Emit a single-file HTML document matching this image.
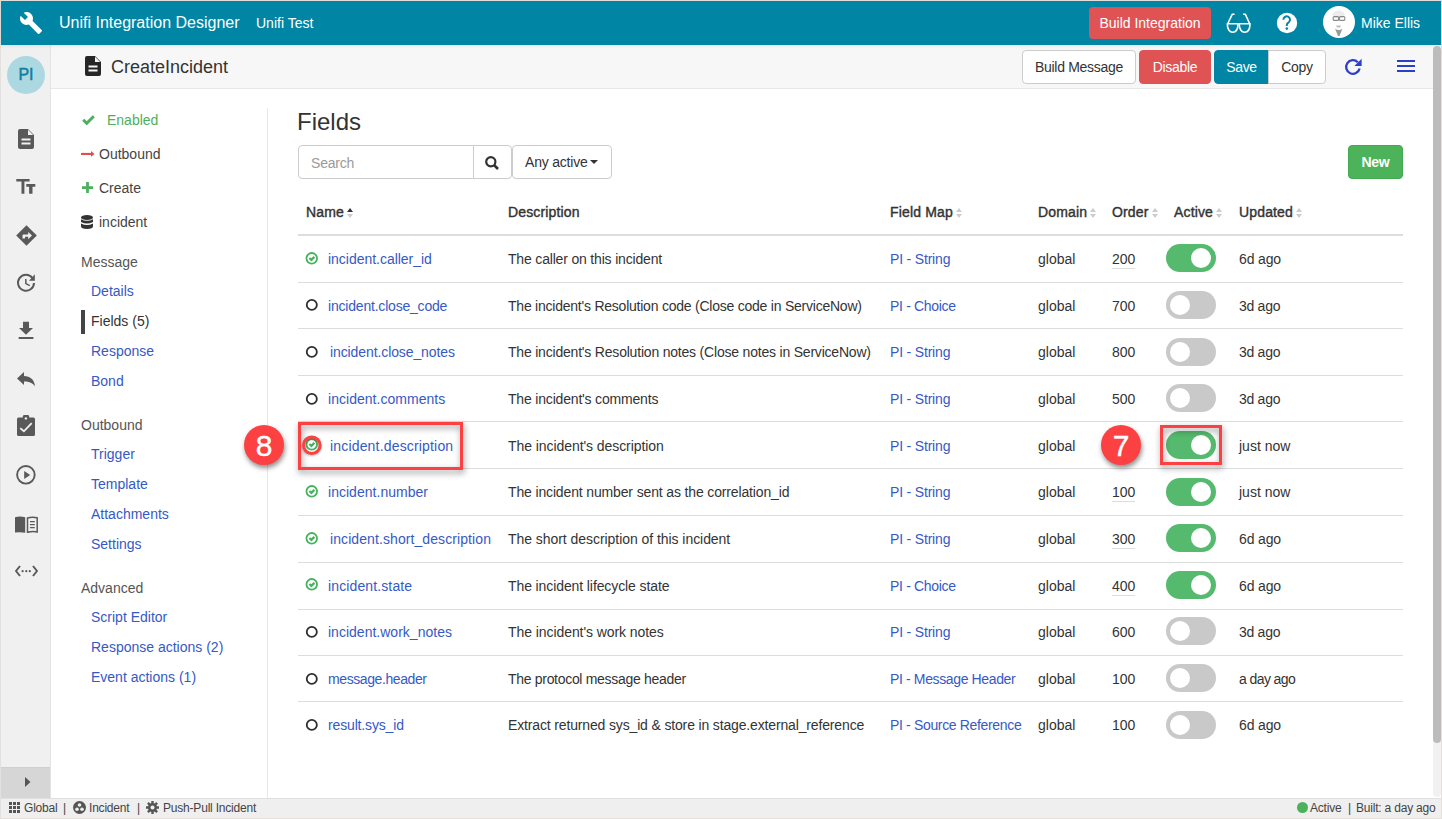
<!DOCTYPE html>
<html><head><meta charset="utf-8">
<style>
*{box-sizing:border-box}
html,body{margin:0;padding:0;width:1442px;height:819px;overflow:hidden;background:#fff;font-family:"Liberation Sans",sans-serif;color:#333}
.a{position:absolute;white-space:nowrap}
#frame{position:absolute;left:0;top:0;width:1442px;height:819px;border:1px solid #e4e0de}
#top{position:absolute;left:1px;top:1px;width:1440px;height:44px;background:#0085a4;box-shadow:0 1px 3px rgba(0,0,0,0.08)}
#top .a{}
#hdr{position:absolute;left:51px;top:45px;width:1382px;height:44px;background:#f7f7f7;border-bottom:1px solid #e7e7e7}
#side{position:absolute;left:1px;top:45px;width:50px;height:753px;background:#f0f0f0;border-right:1px solid #e3e3e3}
#foot{position:absolute;left:1px;top:798px;width:1440px;height:20px;background:#efefef;border-top:1px solid #e0e0e0}
.btn{position:absolute;height:34px;border-radius:4px;font-size:14px;line-height:32px;text-align:center;border:1px solid #ccc;background:#fff;color:#333;white-space:nowrap;letter-spacing:-0.3px}
.nav{position:absolute;font-size:14px;line-height:16px;white-space:nowrap;color:#444}
.lnk{color:#3659c6}
.th{position:absolute;top:204px;font-size:14px;font-weight:normal;-webkit-text-stroke:0.4px #333;letter-spacing:0.15px;line-height:16px;color:#333;white-space:nowrap}
.c{position:absolute;font-size:14px;line-height:16px;white-space:nowrap;letter-spacing:-0.15px}
.tg{position:absolute;left:1166px;width:50px;height:28px;border-radius:14px;background:#c9c9c9}
.tg.on{background:#56ba6e}
.tg i{position:absolute;top:4px;left:4px;width:20px;height:20px;border-radius:10px;background:#fff}
.tg.on i{left:25px}
.sort{display:inline-block;width:6px;height:10px;position:relative;margin-left:3px;vertical-align:-1px}
.sort:before{content:"";position:absolute;left:0;top:0;border-left:3px solid transparent;border-right:3px solid transparent;border-bottom:4px solid #ccc}
.sort:after{content:"";position:absolute;left:0;top:6px;border-left:3px solid transparent;border-right:3px solid transparent;border-top:4px solid #ccc}
.sort.up:before{border-bottom-color:#333}
.ord{border-bottom:1px solid #ddd;padding-bottom:1px}
.ft{top:801px;font-size:12px;line-height:14px;color:#444;letter-spacing:-0.2px}

</style></head><body>
<div id="frame"></div>
<div id="side"></div>
<div id="hdr"></div>
<div id="foot"></div>
<div id="top"></div>
<svg class="a" style="left:19px;top:11px" width="24" height="24" viewBox="0 0 24 24"><path fill="#fff" d="M22.7 19l-9.1-9.1c.9-2.3.4-5-1.5-6.9-2-2-5-2.4-7.4-1.3L9 6 6 9 1.6 4.7C.4 7.1.9 10.1 2.9 12.1c1.9 1.9 4.6 2.4 6.9 1.5l9.1 9.1c.4.4 1 .4 1.4 0l2.3-2.3c.5-.4.5-1.1.1-1.4z"/></svg>
<div class="a" style="left:59px;top:14px;font-size:16px;line-height:18px;color:#fff">Unifi Integration Designer</div>
<div class="a" style="left:256px;top:14px;font-size:14px;line-height:18px;color:#fff">Unifi Test</div>
<div class="a" style="left:1089px;top:7px;width:122px;height:32px;background:#e05355;border-radius:4px;color:#fff;font-size:14px;line-height:32px;text-align:center">Build Integration</div>
<svg class="a" style="left:1226px;top:13px" width="26" height="21" viewBox="0 0 26 21"><g fill="none" stroke="#fff" stroke-width="1.6" stroke-linejoin="round"><path d="M1.3 10.8H12C12 17 9.3 19.2 6.65 19.2S1.3 17 1.3 10.8z"/><path d="M13.2 10.8H24C24 17 21.3 19.2 18.6 19.2S13.2 17 13.2 10.8z"/><path d="M1.6 11L6.2 1.3H8.6M23.8 11L19.4 1.3H17"/></g></svg>
<svg class="a" style="left:1276px;top:12px" width="22" height="22" viewBox="0 0 22 22"><circle cx="11" cy="11" r="10.2" fill="#fff"/><path fill="none" stroke="#0085a4" stroke-width="2" d="M7.4 7.7A3.3 3.3 0 1 1 12.7 10.3Q10.8 11.3 10.8 12.9V14"/><circle cx="10.8" cy="16.6" r="1.3" fill="#0085a4"/></svg>
<svg class="a" style="left:1323px;top:6px" width="32" height="32" viewBox="0 0 32 32"><circle cx="16" cy="16" r="16" fill="#fff"/><ellipse cx="15.5" cy="8.5" rx="6" ry="4" fill="#ececec"/><g fill="none" stroke="#8a8a8a" stroke-width="1.1"><rect x="10.2" y="10.6" width="5.4" height="3.8" rx="1"/><rect x="16.4" y="10.6" width="5.4" height="3.8" rx="1"/></g><path d="M13 19.5h5l-1 2h-3z" fill="#bbb"/><path d="M12 22.5q4 3 7.5 0l-3 7.5h-1.5z" fill="#9a9a9a"/></svg>
<div class="a" style="left:1361px;top:14px;font-size:14px;line-height:18px;color:#fff">Mike Ellis</div>
<svg class="a" style="left:18px;top:129px" width="16" height="20" viewBox="0 0 16 20"><path fill="#595959" d="M2 0h8l6 6v12a2 2 0 0 1-2 2H2a2 2 0 0 1-2-2V2a2 2 0 0 1 2-2z"/><path fill="#f0f0f0" d="M10 0.8v5.2h5.2z"/><rect x="3.5" y="9.5" width="9" height="2" fill="#f0f0f0"/><rect x="3.5" y="13.5" width="9" height="2" fill="#f0f0f0"/></svg>
<svg class="a" style="left:16px;top:179px" width="20" height="15" viewBox="0 0 20 15"><path fill="#595959" d="M0.3 0h13.3v2.5H8.4v12.2H5.5V2.5H0.3z M10.3 5h9v2.7h-2.8v7h-3.4v-7h-2.8z"/></svg>
<svg class="a" style="left:15.5px;top:224.5px" width="21" height="21" viewBox="0 0 21 21"><path fill="#595959" d="M10.5 0.2l10.3 10.3-10.3 10.3L0.2 10.5z"/><path fill="#f0f0f0" d="M6.5 13.5V10.4a1 1 0 0 1 1-1H12.2V7l3.8 3.6-3.8 3.6V11.8H9v1.7z"/></svg>
<svg class="a" style="left:16px;top:273px" width="21" height="20" viewBox="0 0 21 20"><path fill="none" stroke="#595959" stroke-width="2" d="M18 9.9A8 8 0 1 1 16.4 5"/><path fill="#595959" d="M18.8 1.2v6.5H13z"/><path fill="none" stroke="#595959" stroke-width="1.5" d="M9.85 5.9V10.6l3.9 2.1"/></svg>
<svg class="a" style="left:18px;top:321px" width="16" height="19" viewBox="0 0 16 19"><path fill="#595959" d="M5 0.8h6v6.2h4L8 13.8 1 7h4z"/><rect x="0.7" y="16" width="14.7" height="2" fill="#595959"/></svg>
<svg class="a" style="left:17px;top:372px" width="18" height="15" viewBox="0 0 18 15"><path fill="#595959" d="M0 6.5L7 0v4C13 4 17.5 7.5 18 14.5 16 11 12.5 9.5 7 9.5V13z"/></svg>
<svg class="a" style="left:17px;top:415px" width="18" height="21" viewBox="0 0 18 21"><path fill="#595959" d="M1.5 2.6h4.2a3.3 3.3 0 0 1 6.6 0h4.2A1.5 1.5 0 0 1 18 4.1v15.3a1.5 1.5 0 0 1-1.5 1.5h-15A1.5 1.5 0 0 1 0 19.4V4.1A1.5 1.5 0 0 1 1.5 2.6z"/><circle cx="8.9" cy="3.4" r="1.2" fill="#f0f0f0"/><path fill="none" stroke="#f0f0f0" stroke-width="1.8" d="M3.2 13.1L6.9 16.3 14.7 8.1"/></svg>
<svg class="a" style="left:16px;top:465px" width="20" height="20" viewBox="0 0 20 20"><circle cx="9.9" cy="9.8" r="8.8" fill="none" stroke="#595959" stroke-width="1.9"/><path fill="#595959" d="M8.2 6.1l6 3.9-6 3.9z"/></svg>
<svg class="a" style="left:15px;top:515.5px" width="23" height="17" viewBox="0 0 23 17"><path fill="#595959" d="M0 1.2Q5 0 10.2 1.3V16.8Q5 15.6 0 16.6z"/><path fill="none" stroke="#595959" stroke-width="1.5" d="M12.5 1.9Q17.5 0.6 22.2 1.8V15.9Q17.5 15.1 12.5 16.3z"/><path fill="none" stroke="#595959" stroke-width="1.2" d="M15 5.6h4.8M15 8.6h4.8M15 11.6h4.8"/></svg>
<svg class="a" style="left:15px;top:565px" width="23" height="12" viewBox="0 0 23 12"><path fill="none" stroke="#595959" stroke-width="2" d="M5 1L1 6l4 5 M18 1L22 6l-4 5"/><circle cx="7.6" cy="6.2" r="1.1" fill="#595959"/><circle cx="11.3" cy="6.2" r="1.1" fill="#595959"/><circle cx="14.8" cy="6.2" r="1.1" fill="#595959"/></svg>
<div class="a" style="left:7px;top:56px;width:38px;height:38px;border-radius:19px;background:#acd8e1;color:#0f7fa0;font-size:16px;font-weight:normal;-webkit-text-stroke:0.5px #0f7fa0;line-height:37px;letter-spacing:0px;text-align:center">PI</div>
<div class="a" style="left:1px;top:767px;width:49px;height:31px;background:#d6d6d6;border-top:1px solid #cfcfcf"></div>
<svg class="a" style="left:24px;top:777px" width="8" height="10" viewBox="0 0 8 10"><path fill="#555" d="M1 0l5.5 5L1 10z"/></svg>
<svg class="a" style="left:85px;top:56px" width="16" height="20" viewBox="0 0 16 20"><path fill="#262626" d="M2 0h8l6 6v12a2 2 0 0 1-2 2H2a2 2 0 0 1-2-2V2a2 2 0 0 1 2-2z"/><path fill="#f7f7f7" d="M10 0.8v5.2h5.2z"/><rect x="3.5" y="9.5" width="9" height="2" fill="#f7f7f7"/><rect x="3.5" y="13.5" width="9" height="2" fill="#f7f7f7"/></svg>
<div class="a" style="left:111px;top:57px;font-size:18px;line-height:20px;color:#333">CreateIncident</div>
<div class="btn" style="left:1022px;top:50px;width:114px">Build Message</div>
<div class="btn" style="left:1139px;top:50px;width:72px;background:#e05355;border-color:#e05355;color:#fff">Disable</div>
<div class="btn" style="left:1214px;top:50px;width:55px;background:#0085a4;border-color:#0085a4;color:#fff;border-radius:4px 0 0 4px">Save</div>
<div class="btn" style="left:1268px;top:50px;width:58px;border-radius:0 4px 4px 0">Copy</div>
<svg class="a" style="left:1344px;top:58px" width="19" height="18" viewBox="0 0 19 18"><path fill="none" stroke="#2b3fcb" stroke-width="2.3" d="M15.6 10.5A6.8 6.8 0 1 1 13.8 4.2"/><path fill="#2b3fcb" d="M17.6 0.8v7.2h-7.2z"/></svg>
<div class="a" style="left:1397px;top:60px;width:18px;height:2px;background:#2b3fcb"></div>
<div class="a" style="left:1397px;top:65px;width:18px;height:2px;background:#2b3fcb"></div>
<div class="a" style="left:1397px;top:70px;width:18px;height:2px;background:#2b3fcb"></div>
<div class="a" style="left:1433px;top:45px;width:8px;height:752px;background:#f1f1f1;border-radius:4px"></div>
<div class="a" style="left:1433px;top:46px;width:8px;height:697px;background:#bcbcbc;border-radius:4px"></div>
<div class="a" style="left:267px;top:108px;width:1px;height:690px;background:#e8e8e8"></div>
<svg class="a" style="left:82px;top:115px" width="13" height="10" viewBox="0 0 13 10"><path fill="none" stroke="#4cb05e" stroke-width="3" d="M1.2 4.8l3.5 3.5L11.8 1.2"/></svg>
<div class="nav" style="left:107px;top:112px;color:#4cb05e">Enabled</div>
<svg class="a" style="left:80px;top:150px" width="16" height="8" viewBox="0 0 16 8"><rect x="1" y="2.9" width="11" height="2.1" fill="#e04d4d"/><path fill="#e04d4d" d="M11 1l3.5 3L11 6.8z"/></svg>
<div class="nav" style="left:99px;top:146px">Outbound</div>
<svg class="a" style="left:81.5px;top:182px" width="11" height="11" viewBox="0 0 12 12"><path fill="#4cb05e" d="M4.5 0h3v4.5H12v3H7.5V12h-3V7.5H0v-3h4.5z"/></svg>
<div class="nav" style="left:99px;top:180px">Create</div>
<svg class="a" style="left:81px;top:215px" width="12" height="14" viewBox="0 0 12 14"><ellipse cx="6" cy="2.5" rx="6" ry="2.5" fill="#333"/><path fill="#333" d="M0 4.3q6 3 12 0v2.6q-6 3-12 0z M0 8.5q6 3 12 0v2.8Q12 14 6 14T0 11.3z"/></svg>
<div class="nav" style="left:99px;top:214px">incident</div>
<div class="nav" style="left:81px;top:254px;color:#555">Message</div>
<div class="nav lnk" style="left:91px;top:283px">Details</div>
<div class="nav" style="left:91px;top:313px;color:#333">Fields (5)</div>
<div class="nav lnk" style="left:91px;top:343px">Response</div>
<div class="nav lnk" style="left:91px;top:373px">Bond</div>
<div class="nav" style="left:81px;top:417px;color:#555">Outbound</div>
<div class="nav lnk" style="left:91px;top:446px">Trigger</div>
<div class="nav lnk" style="left:91px;top:476px">Template</div>
<div class="nav lnk" style="left:91px;top:506px">Attachments</div>
<div class="nav lnk" style="left:91px;top:536px">Settings</div>
<div class="nav" style="left:81px;top:580px;color:#555">Advanced</div>
<div class="nav lnk" style="left:91px;top:609px">Script Editor</div>
<div class="nav lnk" style="left:91px;top:639px">Response actions (2)</div>
<div class="nav lnk" style="left:91px;top:669px">Event actions (1)</div>
<div class="a" style="left:81px;top:310px;width:4px;height:24px;background:#444"></div>
<div class="a" style="left:297px;top:108px;font-size:24px;line-height:28px;color:#333">Fields</div>
<div class="a" style="left:298px;top:145px;width:176px;height:34px;border:1px solid #ccc;border-radius:4px 0 0 4px;background:#fff"></div>
<div class="a" style="left:311px;top:155px;font-size:14px;line-height:16px;color:#9a9a9a;letter-spacing:-0.2px">Search</div>
<div class="a" style="left:473px;top:145px;width:39px;height:34px;border:1px solid #ccc;border-radius:0 4px 4px 0;background:#fff"></div>
<svg class="a" style="left:485px;top:156px" width="14" height="14" viewBox="0 0 14 14"><circle cx="5.8" cy="5.8" r="4.6" fill="none" stroke="#333" stroke-width="2.2"/><path stroke="#333" stroke-width="2.6" d="M9 9l4 4"/></svg>
<div class="a" style="left:512px;top:145px;width:100px;height:34px;border:1px solid #ccc;border-radius:4px;background:#fff"></div>
<div class="a" style="left:525px;top:154px;font-size:14px;line-height:16px;color:#333;letter-spacing:-0.2px">Any active</div>
<svg class="a" style="left:590px;top:160px" width="8" height="4" viewBox="0 0 8 4"><path fill="#333" d="M0 0h8L4 4z"/></svg>
<div class="a" style="left:1348px;top:145px;width:55px;height:34px;border-radius:4px;background:#4db35b;border:1px solid #40ab50;color:#fff;font-size:14px;font-weight:bold;line-height:32px;text-align:center;letter-spacing:-0.3px">New</div>
<div class="th" style="left:306px">Name<span class="sort up"></span></div>
<div class="th" style="left:508px">Description</div>
<div class="th" style="left:890px">Field Map<span class="sort"></span></div>
<div class="th" style="left:1038px">Domain<span class="sort"></span></div>
<div class="th" style="left:1112px">Order<span class="sort"></span></div>
<div class="th" style="left:1174px">Active<span class="sort"></span></div>
<div class="th" style="left:1239px">Updated<span class="sort"></span></div>
<div class="a" style="left:298px;top:234px;width:1105px;height:2px;background:#ddd"></div>
<div class="a" style="left:298px;top:282px;width:1105px;height:1px;background:#ddd"></div>
<svg class="a" style="left:305px;top:251.8px" width="13" height="13" viewBox="0 0 13 13"><circle cx="6.75" cy="6.3" r="5.3" fill="none" stroke="#45b35e" stroke-width="1.8"/><path fill="none" stroke="#45b35e" stroke-width="2.2" d="M4.4 6L6.4 7.9 9.4 4.9"/></svg>
<div class="c lnk" style="left:328px;top:251.0px;letter-spacing:-0.024px">incident.caller_id</div>
<div class="c" style="left:508px;top:251.0px;letter-spacing:-0.177px">The caller on this incident</div>
<div class="c lnk" style="left:890px;top:251.0px;letter-spacing:-0.180px">PI - String</div>
<div class="c" style="left:1038px;top:251.0px;letter-spacing:0">global</div>
<div class="c ord" style="left:1112px;top:251.0px;letter-spacing:0">200</div>
<div class="tg on" style="top:244.3px"><i></i></div>
<div class="c" style="left:1239px;top:251.0px;letter-spacing:-0.150px">6d ago</div>
<div class="a" style="left:298px;top:328px;width:1105px;height:1px;background:#ddd"></div>
<svg class="a" style="left:305px;top:298.4px" width="13" height="13" viewBox="0 0 13 13"><circle cx="6.8" cy="6.9" r="5.05" fill="none" stroke="#2e2e2e" stroke-width="1.8"/></svg>
<div class="c lnk" style="left:328px;top:297.7px;letter-spacing:-0.200px">incident.close_code</div>
<div class="c" style="left:508px;top:297.7px;letter-spacing:-0.230px">The incident's Resolution code (Close code in ServiceNow)</div>
<div class="c lnk" style="left:890px;top:297.7px;letter-spacing:-0.320px">PI - Choice</div>
<div class="c" style="left:1038px;top:297.7px;letter-spacing:0">global</div>
<div class="c" style="left:1112px;top:297.7px;letter-spacing:0">700</div>
<div class="tg" style="top:290.9px"><i></i></div>
<div class="c" style="left:1239px;top:297.7px;letter-spacing:-0.280px">3d ago</div>
<div class="a" style="left:298px;top:375px;width:1105px;height:1px;background:#ddd"></div>
<svg class="a" style="left:305px;top:345.1px" width="13" height="13" viewBox="0 0 13 13"><circle cx="6.8" cy="6.9" r="5.05" fill="none" stroke="#2e2e2e" stroke-width="1.8"/></svg>
<div class="c lnk" style="left:330px;top:344.3px;letter-spacing:-0.100px">incident.close_notes</div>
<div class="c" style="left:508px;top:344.3px;letter-spacing:-0.200px">The incident's Resolution notes (Close notes in ServiceNow)</div>
<div class="c lnk" style="left:890px;top:344.3px;letter-spacing:-0.180px">PI - String</div>
<div class="c" style="left:1038px;top:344.3px;letter-spacing:0">global</div>
<div class="c" style="left:1112px;top:344.3px;letter-spacing:0">800</div>
<div class="tg" style="top:337.6px"><i></i></div>
<div class="c" style="left:1239px;top:344.3px;letter-spacing:-0.280px">3d ago</div>
<div class="a" style="left:298px;top:421px;width:1105px;height:1px;background:#ddd"></div>
<svg class="a" style="left:305px;top:391.7px" width="13" height="13" viewBox="0 0 13 13"><circle cx="6.8" cy="6.9" r="5.05" fill="none" stroke="#2e2e2e" stroke-width="1.8"/></svg>
<div class="c lnk" style="left:328px;top:390.9px;letter-spacing:0.031px">incident.comments</div>
<div class="c" style="left:508px;top:390.9px;letter-spacing:-0.182px">The incident's comments</div>
<div class="c lnk" style="left:890px;top:390.9px;letter-spacing:-0.180px">PI - String</div>
<div class="c" style="left:1038px;top:390.9px;letter-spacing:0">global</div>
<div class="c" style="left:1112px;top:390.9px;letter-spacing:0">500</div>
<div class="tg" style="top:384.2px"><i></i></div>
<div class="c" style="left:1239px;top:390.9px;letter-spacing:-0.280px">3d ago</div>
<div class="a" style="left:298px;top:468px;width:1105px;height:1px;background:#ddd"></div>
<svg class="a" style="left:305px;top:438.3px" width="13" height="13" viewBox="0 0 13 13"><circle cx="6.75" cy="6.3" r="5.3" fill="none" stroke="#45b35e" stroke-width="1.8"/><path fill="none" stroke="#45b35e" stroke-width="2.2" d="M4.4 6L6.4 7.9 9.4 4.9"/></svg>
<div class="c lnk" style="left:330px;top:437.6px;letter-spacing:0.174px">incident.description</div>
<div class="c" style="left:508px;top:437.6px;letter-spacing:-0.068px">The incident's description</div>
<div class="c lnk" style="left:890px;top:437.6px;letter-spacing:-0.180px">PI - String</div>
<div class="c" style="left:1038px;top:437.6px;letter-spacing:0">global</div>
<div class="tg on" style="top:430.8px"><i></i></div>
<div class="c" style="left:1239px;top:437.6px;letter-spacing:0.000px">just now</div>
<div class="a" style="left:298px;top:515px;width:1105px;height:1px;background:#ddd"></div>
<svg class="a" style="left:305px;top:485.0px" width="13" height="13" viewBox="0 0 13 13"><circle cx="6.75" cy="6.3" r="5.3" fill="none" stroke="#45b35e" stroke-width="1.8"/><path fill="none" stroke="#45b35e" stroke-width="2.2" d="M4.4 6L6.4 7.9 9.4 4.9"/></svg>
<div class="c lnk" style="left:328px;top:484.2px;letter-spacing:0.029px">incident.number</div>
<div class="c" style="left:508px;top:484.2px;letter-spacing:-0.144px">The incident number sent as the correlation_id</div>
<div class="c lnk" style="left:890px;top:484.2px;letter-spacing:-0.180px">PI - String</div>
<div class="c" style="left:1038px;top:484.2px;letter-spacing:0">global</div>
<div class="c ord" style="left:1112px;top:484.2px;letter-spacing:0">100</div>
<div class="tg on" style="top:477.5px"><i></i></div>
<div class="c" style="left:1239px;top:484.2px;letter-spacing:0.000px">just now</div>
<div class="a" style="left:298px;top:562px;width:1105px;height:1px;background:#ddd"></div>
<svg class="a" style="left:305px;top:531.6px" width="13" height="13" viewBox="0 0 13 13"><circle cx="6.75" cy="6.3" r="5.3" fill="none" stroke="#45b35e" stroke-width="1.8"/><path fill="none" stroke="#45b35e" stroke-width="2.2" d="M4.4 6L6.4 7.9 9.4 4.9"/></svg>
<div class="c lnk" style="left:330px;top:530.8px;letter-spacing:0.088px">incident.short_description</div>
<div class="c" style="left:508px;top:530.8px;letter-spacing:-0.051px">The short description of this incident</div>
<div class="c lnk" style="left:890px;top:530.8px;letter-spacing:-0.180px">PI - String</div>
<div class="c" style="left:1038px;top:530.8px;letter-spacing:0">global</div>
<div class="c ord" style="left:1112px;top:530.8px;letter-spacing:0">300</div>
<div class="tg on" style="top:524.1px"><i></i></div>
<div class="c" style="left:1239px;top:530.8px;letter-spacing:-0.150px">6d ago</div>
<div class="a" style="left:298px;top:609px;width:1105px;height:1px;background:#ddd"></div>
<svg class="a" style="left:305px;top:578.2px" width="13" height="13" viewBox="0 0 13 13"><circle cx="6.75" cy="6.3" r="5.3" fill="none" stroke="#45b35e" stroke-width="1.8"/><path fill="none" stroke="#45b35e" stroke-width="2.2" d="M4.4 6L6.4 7.9 9.4 4.9"/></svg>
<div class="c lnk" style="left:328px;top:577.5px;letter-spacing:0.123px">incident.state</div>
<div class="c" style="left:508px;top:577.5px;letter-spacing:-0.100px">The incident lifecycle state</div>
<div class="c lnk" style="left:890px;top:577.5px;letter-spacing:-0.320px">PI - Choice</div>
<div class="c" style="left:1038px;top:577.5px;letter-spacing:0">global</div>
<div class="c ord" style="left:1112px;top:577.5px;letter-spacing:0">400</div>
<div class="tg on" style="top:570.7px"><i></i></div>
<div class="c" style="left:1239px;top:577.5px;letter-spacing:-0.150px">6d ago</div>
<div class="a" style="left:298px;top:655px;width:1105px;height:1px;background:#ddd"></div>
<svg class="a" style="left:305px;top:624.8px" width="13" height="13" viewBox="0 0 13 13"><circle cx="6.8" cy="6.9" r="5.05" fill="none" stroke="#2e2e2e" stroke-width="1.8"/></svg>
<div class="c lnk" style="left:328px;top:624.1px;letter-spacing:0.011px">incident.work_notes</div>
<div class="c" style="left:508px;top:624.1px;letter-spacing:-0.071px">The incident's work notes</div>
<div class="c lnk" style="left:890px;top:624.1px;letter-spacing:-0.180px">PI - String</div>
<div class="c" style="left:1038px;top:624.1px;letter-spacing:0">global</div>
<div class="c" style="left:1112px;top:624.1px;letter-spacing:0">600</div>
<div class="tg" style="top:617.3px"><i></i></div>
<div class="c" style="left:1239px;top:624.1px;letter-spacing:-0.280px">3d ago</div>
<div class="a" style="left:298px;top:701px;width:1105px;height:1px;background:#ddd"></div>
<svg class="a" style="left:305px;top:671.5px" width="13" height="13" viewBox="0 0 13 13"><circle cx="6.8" cy="6.9" r="5.05" fill="none" stroke="#2e2e2e" stroke-width="1.8"/></svg>
<div class="c lnk" style="left:328px;top:670.7px;letter-spacing:-0.408px">message.header</div>
<div class="c" style="left:508px;top:670.7px;letter-spacing:-0.304px">The protocol message header</div>
<div class="c lnk" style="left:890px;top:670.7px;letter-spacing:-0.367px">PI - Message Header</div>
<div class="c" style="left:1038px;top:670.7px;letter-spacing:0">global</div>
<div class="c" style="left:1112px;top:670.7px;letter-spacing:0">100</div>
<div class="tg" style="top:664.0px"><i></i></div>
<div class="c" style="left:1239px;top:670.7px;letter-spacing:-0.588px">a day ago</div>
<svg class="a" style="left:305px;top:718.1px" width="13" height="13" viewBox="0 0 13 13"><circle cx="6.8" cy="6.9" r="5.05" fill="none" stroke="#2e2e2e" stroke-width="1.8"/></svg>
<div class="c lnk" style="left:328px;top:717.4px;letter-spacing:-0.150px">result.sys_id</div>
<div class="c" style="left:508px;top:717.4px;letter-spacing:-0.150px">Extract returned sys_id &amp; store in stage.external_reference</div>
<div class="c lnk" style="left:890px;top:717.4px;letter-spacing:-0.340px">PI - Source Reference</div>
<div class="c" style="left:1038px;top:717.4px;letter-spacing:0">global</div>
<div class="c" style="left:1112px;top:717.4px;letter-spacing:0">100</div>
<div class="tg" style="top:710.6px"><i></i></div>
<div class="c" style="left:1239px;top:717.4px;letter-spacing:-0.150px">6d ago</div>
<svg class="a" style="left:290px;top:414px;overflow:visible" width="190" height="70"><g style="filter:drop-shadow(1px 3px 3px rgba(0,0,0,0.45))"><rect x="9.5" y="9.5" width="162" height="45" fill="none" stroke="#fd4042" stroke-width="3"/></g><circle cx="21.8" cy="31.3" r="8.3" fill="none" stroke="#fd4042" stroke-width="3" style="filter:drop-shadow(0.5px 1px 1px rgba(0,0,0,0.3))"/></svg>
<svg class="a" style="left:1150px;top:414px;overflow:visible" width="90" height="70"><g style="filter:drop-shadow(1px 3px 3px rgba(0,0,0,0.45))"><rect x="11.5" y="12.5" width="59" height="37" fill="none" stroke="#fd4042" stroke-width="3"/></g></svg>
<div class="a" style="left:244px;top:425px;width:40px;height:40px;border-radius:20px;background:#fd4042;box-shadow:1px 3px 5px rgba(0,0,0,0.45);color:#fff;font-size:30px;-webkit-text-stroke:0.4px #fff;line-height:41px;text-align:center">8</div>
<div class="a" style="left:1101px;top:425px;width:40px;height:40px;border-radius:20px;background:#fd4042;box-shadow:1px 3px 5px rgba(0,0,0,0.45);color:#fff;font-size:30px;-webkit-text-stroke:0.4px #fff;line-height:41px;text-align:center">7</div>
<svg class="a" style="left:9px;top:802px" width="11" height="11" viewBox="0 0 11 11"><g fill="#555"><rect x="0" y="0" width="3" height="3"/><rect x="4" y="0" width="3" height="3"/><rect x="8" y="0" width="3" height="3"/><rect x="0" y="4" width="3" height="3"/><rect x="4" y="4" width="3" height="3"/><rect x="8" y="4" width="3" height="3"/><rect x="0" y="8" width="3" height="3"/><rect x="4" y="8" width="3" height="3"/><rect x="8" y="8" width="3" height="3"/></g></svg>
<div class="a ft" style="left:24px">Global</div>
<div class="a ft" style="left:63px">|</div>
<svg class="a" style="left:73px;top:801px" width="13" height="13" viewBox="0 0 13 13"><circle cx="6.5" cy="6.5" r="6.5" fill="#555"/><circle cx="6.5" cy="4" r="1.8" fill="#efefef"/><circle cx="4" cy="8.3" r="1.8" fill="#efefef"/><circle cx="9" cy="8.3" r="1.8" fill="#efefef"/></svg>
<div class="a ft" style="left:89px">Incident</div>
<div class="a ft" style="left:137px">|</div>
<svg class="a" style="left:146px;top:801px" width="13" height="13" viewBox="0 0 13 13"><g fill="#555"><circle cx="6.5" cy="6.5" r="4.5"/><g stroke="#555" stroke-width="2.4"><path d="M6.5 0v13M0 6.5h13M1.9 1.9l9.2 9.2M11.1 1.9l-9.2 9.2"/></g></g><circle cx="6.5" cy="6.5" r="2" fill="#efefef"/></svg>
<div class="a ft" style="left:163px">Push-Pull Incident</div>
<div class="a" style="left:1297px;top:802px;width:11px;height:11px;border-radius:6px;background:#4cb05e"></div>
<div class="a ft" style="left:1310px">Active</div>
<div class="a ft" style="left:1348px">|</div>
<div class="a ft" style="left:1356px">Built: a day ago</div>
</body></html>
